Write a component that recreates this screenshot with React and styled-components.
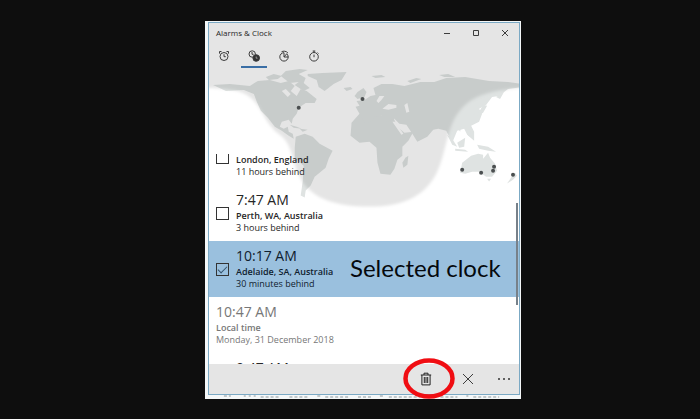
import React, { useState } from "react";
import styled, { createGlobalStyle, css } from "styled-components";

const GlobalStyle = createGlobalStyle`
  *, *::before, *::after { box-sizing: border-box; }
  body {
    margin: 0;
    background: #0e0e0e;
    color: #262626;
    font-family: "Open Sans", "Noto Sans", sans-serif;
    font-size: 9px;
  }
  button { border: 0; padding: 0; background: none; color: inherit; font: inherit; }
  ul { margin: 0; padding: 0; list-style: none; }
`;

const Page = styled.main`
  min-height: 100vh;
  display: grid;
  grid-template-columns: 205fr minmax(280px, 316px) 179fr;
  align-items: start;
  padding-top: 21px;
  background: #0e0e0e;
`;

const Figure = styled.div`
  grid-column: 2;
  padding: 1px 1px 0 3px;
  background: #f4f7f8;
`;

const Window = styled.section`
  border: 1px solid #7ba9c4;
  background: #fff;
`;

const Header = styled.header`
  background: #e5e5e5;
`;

const TitleBar = styled.div`
  display: flex;
  align-items: center;
  height: 20px;
  padding-left: 7px;
`;

const Title = styled.h1`
  flex: 1;
  margin: 0;
  font-size: 8px;
  line-height: 20px;
  font-weight: 400;
`;

const CaptionButton = styled.button`
  display: grid;
  place-items: center;
  width: 29px;
  height: 20px;
`;

const Tabs = styled.nav`
  display: flex;
  gap: 4px;
  padding-left: 2px;
`;

const Tab = styled.button`
  display: grid;
  place-items: center;
  width: 26px;
  height: 25px;
  padding-top: 2px;
  border-bottom: 2px solid ${(p) => (p.$active ? "#3a6ea5" : "transparent")};
`;

const Stage = styled.div`
  display: grid;
  position: relative;
  overflow: hidden;
`;

const MapSvg = styled.svg`
  grid-area: 1 / 1;
  display: block;
  width: 100%;
`;

const ClockViewport = styled.div`
  grid-area: 1 / 1;
  z-index: 1;
  height: 210px;
  margin-top: 86px;
  overflow: hidden;
`;

const ClockList = styled.ul`
  margin-top: -25px;
`;

const ClockRow = styled.li`
  position: relative;
  display: flex;
  height: 56px;
  padding: 5px 7px 0;
  ${(p) => p.$selected && css`background: #9ac0de; color: #10202e;`}
  ${(p) => p.$local && css`color: #777;`}
`;

const ClockLabel = styled.label`
  display: flex;
  gap: 7px;
`;

const Check = styled.input`
  appearance: none;
  display: grid;
  place-items: center;
  width: 13px;
  height: 13px;
  margin: 17px 0 0;
  border: 1px solid #333;
  &::after {
    content: "";
    width: 9px;
    height: 5px;
    margin-top: -3px;
    border-left: 1px solid #34536c;
    border-bottom: 1px solid #34536c;
    transform: rotate(-45deg);
    visibility: hidden;
  }
  &:checked::after { visibility: visible; }
`;

const ClockText = styled.span`
  display: flex;
  flex-direction: column;
  white-space: nowrap;
`;

const Time = styled.span`
  font-size: 14px;
  line-height: 20px;
`;

const Place = styled.span`
  font-size: 9px;
  line-height: 12px;
  font-weight: 600;
`;

const Detail = styled.span`
  font-size: 9px;
  line-height: 12px;
`;

const Annotation = styled.span`
  position: absolute;
  left: 141px;
  top: 12px;
  color: #05090d;
  font-family: Lato, sans-serif;
  font-size: 24px;
  line-height: 30px;
  white-space: nowrap;
`;

const ScrollThumb = styled.div`
  position: absolute;
  z-index: 2;
  right: 1px;
  top: 135px;
  width: 2px;
  height: 102px;
  background: #77818a;
`;

const CommandBar = styled.footer`
  display: flex;
  justify-content: flex-end;
  height: 30px;
  background: #e5e5e5;
`;

const commandWidths = { large: "44px", medium: "40px", small: "31px" };

const Command = styled.button`
  position: relative;
  display: grid;
  place-items: center;
  width: ${(p) => commandWidths[p.$size]};
`;

const Ring = styled.svg`
  position: absolute;
  left: -1px;
  top: -6px;
  pointer-events: none;
`;

const CutLine = styled.svg`
  display: block;
  width: 100%;
  height: 4px;
`;

const line = { fill: "none", stroke: "#3d3d3d", strokeWidth: 1 };

const AlarmIcon = () => (
  <svg width="12" height="12" viewBox="0 0 12 12" {...line}>
    <circle cx="6" cy="6.5" r="4" />
    <path d="M1.5 3.6V1.5h2M8.5 1.5h2v2.1M6 4.2v2.5h1.8" />
  </svg>
);

const WorldIcon = () => (
  <svg width="12" height="12" viewBox="0 0 12 12" {...line}>
    <circle cx="4.2" cy="4" r="3.2" />
    <path d="M4 2v2.3h1.6" />
    <circle cx="8.2" cy="8" r="3.3" fill="#333" />
    <path d="M8.2 6.5v1.7h1.3" stroke="#999" />
  </svg>
);

const TimerIcon = () => (
  <svg width="12" height="12" viewBox="0 0 12 12" {...line}>
    <path d="M6 2.7a4.2 4.2 0 1 0 4.2 4.2M6 2.7V7h4.2M3.5 1.8C5 .8 8.5.8 10 3.2M10.2 7A4.2 4.2 0 0 0 8.5 3.6" />
    <path d="M6 7l2.5-3" />
  </svg>
);

const StopwatchIcon = () => (
  <svg width="12" height="12" viewBox="0 0 12 12" {...line}>
    <circle cx="6" cy="6.8" r="4.3" />
    <path d="M6 4.6V7.2M4.7 1h2.6M6 1v1.5M9.6 2.6l.9.9" />
  </svg>
);

const TrashIcon = () => (
  <svg width="12" height="14" viewBox="0 0 12 14" fill="none" stroke="#222" strokeWidth="1">
    <path d="M.8 3h10.4M4 3V1.2h4V3M1.9 3v9.9h8.2V3M4.3 5v6M6 5v6M7.7 5v6" />
  </svg>
);

const tabs = [
  ["Alarm", AlarmIcon],
  ["World Clock", WorldIcon],
  ["Timer", TimerIcon],
  ["Stopwatch", StopwatchIcon],
];

const continents = [
  // North and Central America
  "M213 85L230 84 250 86 258 81 270 80 281 83 289 81 295 86 291 91 297 96 301 89 307 91 317 99 315 103 306 103 299 108 297 114 293 119 292 124 289 120 282 122 280 127 284 129 288 127 289 132 293 134 294 139 289 136 282 131 275 127 268 118 261 111 257 102 254 94 244 90 226 91Z",
  "M266 77l8-3 8 2-4 3-9 1ZM281 76l5-5 14-2 8 1-9 4 7 4-2 5 6 5-6 3-9-6 4-3-9 1Z",
  "M308 74l15-1 24-1-5 8-8 4-9 7-6-4-2-7-9-4Z",
  // Caribbean islands
  "M290 125l7 2 5 2-8-1ZM300 129l8 1-5 2Z",
  // South America
  "M296 137l9-3 8 3 7 7 13 7-4 8-3 9-11 9-4 9-5 5-1 7-4-2 2-14 1-16-9-8 0-10Z",
  // Africa
  "M360 114l13-2 9 4 12 2 4 9 7 6 9-1-5 9-6 6v9l-5 4-3 9-4 6-10-1-3-11-1-15-7-6-10 1-9-7 1-13Z",
  "M406 158l3-2-1 9-4 3-1-5Z",
  // Eurasia
  "M356 107l4-1-3-5 8-1 6-4 5-1-2-7 8-4 11 0 12 2 16-4 14 0 12-4 19-1 24 4 19 1 15 2 12-1v3l-12 1-15 2-9 7-7 1-6 8-7 4 3 5-3 8-8 4 3 6 0 9-7-6-3-6-7 2-5 12-6-12-8-2-5 1-6 7-10 5-5-8-6-9-7-1-5-5-7 3-6-6-7 1-3 5-7 1Z",
  "M358 92l6-4 3 4-2 5-7 2-3-3ZM344 88l7-1 2 2-6 2Z",
  "M372 76l10-1 4 2-10 1ZM408 81l9-3 5 1-11 4ZM440 75l9-1 7 3-11 0Z",
  // Japan and Pacific islands
  "M474 115l6-3 4-7 4 1-4 7-7 4ZM481 99l4-3 1 6-4 4ZM497 97l8-5-4 7Z",
  "M459 129l3-4-1 7ZM467 129l3 0 3 9-4-2Z",
  "M448 135l5 4 5 8-5-2ZM458 143l8-5-1 9-5 1ZM456 149l10 1 3 2-13-1ZM478 145l11 2 8 5-8-1-9-2Z",
  // Australia and New Zealand
  "M463 163l9-7 7-2 5 1 0 4 5-6 2 5 5 6 2 7-5 6-6 0-7-5-7 0-7 2-5-1ZM488 179h4l-2 3ZM516 173l2 3-4 4-6 4 4-6Z",
];

const waters = "M377 101l3-5 5 0-3 4-3 3ZM383 109l6-5 8 1 0 3-8 2ZM405 105l3-2 2 9-3 1ZM393 122l3 0 8 12-2 1ZM282 91l4-2 5 5-3 3Z";

const pins = [
  [299, 108], [363, 99], [463, 170], [482, 173], [495, 167], [494, 171], [514, 175],
];

function Land({ color, water }) {
  return (
    <g>
      {continents.map((d) => <path key={d} d={d} fill={color} />)}
      <path d={waters} fill={water} />
    </g>
  );
}

function WorldMap() {
  return (
    <MapSvg viewBox="209 68 311 142" role="img" aria-label="World map">
      <defs>
        <filter id="dusk"><feGaussianBlur stdDeviation="1.8" /></filter>
        <mask id="daylight" maskUnits="userSpaceOnUse" x="209" y="60" width="312" height="152">
          <path
            filter="url(#dusk)"
            fill="#fff"
            d="M190 50H540V87C505 88 481 92 467 104C446 122 449 150 437 174C424 199 400 207 370 207C335 207 311 198 301 179C291 160 293 144 280 135C264 124 262 104 247 95C237 89 222 88 190 88Z"
          />
        </mask>
      </defs>
      <Land color="#dfe3e2" water="#fff" />
      <g mask="url(#daylight)">
        <rect x="209" y="60" width="312" height="152" fill="#e5e5e5" />
        <Land color="#c8cccb" water="#e5e5e5" />
      </g>
      {pins.map(([x, y]) => <circle key={`${x}-${y}`} cx={x} cy={y} r="2" fill="#4b4f50" />)}
    </MapSvg>
  );
}

const clocks = [
  { id: "london", time: "11:47 PM", place: "London, England", detail: "11 hours behind" },
  { id: "perth", time: "7:47 AM", place: "Perth, WA, Australia", detail: "3 hours behind" },
  { id: "adelaide", time: "10:17 AM", place: "Adelaide, SA, Australia", detail: "30 minutes behind", note: "Selected clock" },
  { id: "local", time: "10:47 AM", place: "Local time", detail: "Monday, 31 December 2018", local: true },
  { id: "brisbane", time: "9:47 AM", place: "", detail: "" },
];

function Clock({ clock, selected, onToggle }) {
  const text = (
    <ClockText>
      <Time>{clock.time}</Time>
      <Place>{clock.place}</Place>
      <Detail>{clock.detail}</Detail>
    </ClockText>
  );
  return (
    <ClockRow $selected={selected} $local={clock.local}>
      {clock.local ? text : (
        <ClockLabel>
          <Check type="checkbox" checked={selected} onChange={onToggle} />
          {text}
        </ClockLabel>
      )}
      {clock.note && <Annotation>{clock.note}</Annotation>}
    </ClockRow>
  );
}

export default function App() {
  const [tab, setTab] = useState("World Clock");
  const [selected, setSelected] = useState("adelaide");
  return (
    <Page>
      <GlobalStyle />
      <Figure>
        <Window>
          <Header>
            <TitleBar>
              <Title>Alarms &amp; Clock</Title>
              <CaptionButton aria-label="Minimize">
                <svg width="8" height="8" viewBox="0 0 8 8" {...line}><path d="M1 4.5h6" /></svg>
              </CaptionButton>
              <CaptionButton aria-label="Maximize">
                <svg width="8" height="8" viewBox="0 0 8 8" {...line}><path d="M1.5 1.5h5v5h-5z" /></svg>
              </CaptionButton>
              <CaptionButton aria-label="Close">
                <svg width="8" height="8" viewBox="0 0 8 8" {...line}><path d="M1 1l6 6M7 1L1 7" /></svg>
              </CaptionButton>
            </TitleBar>
            <Tabs>
              {tabs.map(([name, Icon]) => (
                <Tab key={name} aria-label={name} $active={tab === name} onClick={() => setTab(name)}>
                  <Icon />
                </Tab>
              ))}
            </Tabs>
          </Header>
          <Stage>
            <WorldMap />
            <ClockViewport>
              <ClockList>
                {clocks.map((clock) => (
                  <Clock
                    key={clock.id}
                    clock={clock}
                    selected={selected === clock.id}
                    onToggle={() => setSelected(selected === clock.id ? null : clock.id)}
                  />
                ))}
              </ClockList>
            </ClockViewport>
            <ScrollThumb />
          </Stage>
          <CommandBar>
            <Command $size="large" aria-label="Delete">
              <TrashIcon />
              <Ring width="52" height="41" viewBox="0 0 52 41">
                <ellipse cx="26" cy="20.5" rx="23.5" ry="18" fill="none" stroke="#f00d12" strokeWidth="4.5" />
              </Ring>
            </Command>
            <Command $size="medium" aria-label="Cancel">
              <svg width="12" height="12" viewBox="0 0 12 12" {...line}><path d="M1 1l10 10M11 1L1 11" /></svg>
            </Command>
            <Command $size="small" aria-label="More">
              <svg width="14" height="4" viewBox="0 0 14 4" fill="#333">
                <circle cx="2" cy="2" r="1" /><circle cx="7" cy="2" r="1" /><circle cx="12" cy="2" r="1" />
              </svg>
            </Command>
          </CommandBar>
        </Window>
        <CutLine viewBox="0 0 314 4" preserveAspectRatio="none" aria-hidden="true">
          <path d="M16 1h7M36 1h2M41 1h2M46 1h2M53 2h20M82 2h18M110 1h3M118 2h24M151 2h14M173 1h3M182 2h32M225 1h3M234 2h17M260 1h2M267 2h26" stroke="#8f989d" strokeDasharray="3 2" />
        </CutLine>
      </Figure>
    </Page>
  );
}
